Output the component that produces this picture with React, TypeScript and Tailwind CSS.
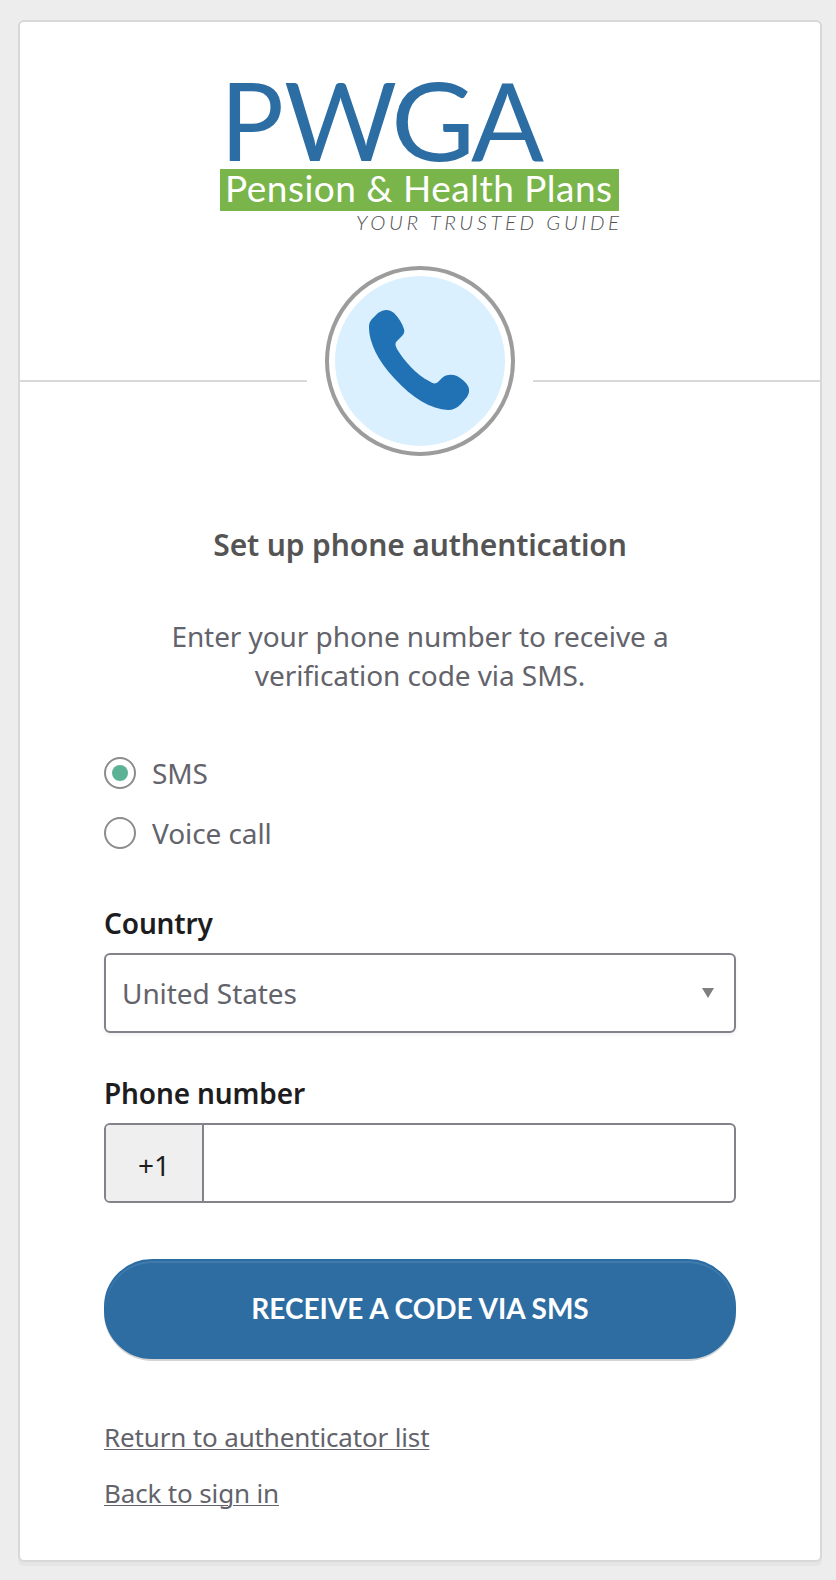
import { useState } from 'react'
import clsx from 'clsx'

const methods = [
  { id: 'sms', label: 'SMS' },
  { id: 'call', label: 'Voice call' },
]

function Logo() {
  return (
    <svg width="404" height="192" viewBox="0 -32 404 192" role="img" aria-label="PWGA Pension & Health Plans">
      <g fill="#2c6da3" fontFamily="Lato, sans-serif" fontSize="109">
        <text x="0" y="81" textLength="64" lengthAdjust="spacingAndGlyphs">P</text>
        <text x="64" y="81" textLength="113" lengthAdjust="spacingAndGlyphs">W</text>
        <text x="171" y="81" textLength="84" lengthAdjust="spacingAndGlyphs">G</text>
        <text x="251" y="81" textLength="73" lengthAdjust="spacingAndGlyphs">A</text>
      </g>
      <rect x="0" y="89" width="399" height="42" fill="#79b54a" />
      <text
        x="5" y="122" fill="#fff" fontFamily="Lato, sans-serif" fontSize="37"
        textLength="387" lengthAdjust="spacing"
      >
        Pension &amp; Health Plans
      </text>
      <text
        x="136" y="150" fill="#4f5052" fontFamily="Lato, sans-serif" fontSize="20.5" fontStyle="italic" fontWeight="300"
        textLength="263" lengthAdjust="spacing"
      >
        YOUR TRUSTED GUIDE
      </text>
    </svg>
  )
}

function PhoneBadge() {
  return (
    <div className="flex h-[190px] w-[190px] items-center justify-center rounded-full border-4 border-[#9c9c9c] bg-white">
      <svg width="170" height="170" viewBox="0 0 170 170" aria-hidden="true">
        <circle cx="85" cy="85" r="85" fill="#daf0fe" />
        <path
          d="M34 52C34 47 35 45 38 42L43 37C49 33 54 33 59 37C64 42 67 47 69 53C70 57 68 59 66 61L62 65C60 67 60 69 62 73C69 85 82 99 94 105C98 108 101 108 103 106L107 102C111 98 117 98 122 100C127 103 131 106 133 110C135 114 134 118 132 121L126 128C122 132 118 134 113 134C96 133 78 123 59 102C43 85 34 66 34 52Z"
          fill="#2172b4"
        />
      </svg>
    </div>
  )
}

export default function App() {
  const [method, setMethod] = useState('sms')
  const [phone, setPhone] = useState('')

  return (
    <div className="h-[1580px] w-[836px] bg-[#ededed] pl-[18px] pt-5 font-['Noto_Sans',sans-serif] text-[28px] tracking-[-0.08px] text-[#63636b]">
      <main className="flex h-[1542px] w-[804px] flex-col rounded-md border-2 border-[#d8d8d8] bg-white shadow-[0_4px_0_rgba(175,175,175,0.12)]">
        <header className="flex h-[244px] shrink-0 justify-center pl-[3px] pt-[26px]">
          <Logo />
        </header>

        <div className="flex h-[190px] shrink-0 justify-between">
          <div className="mt-[114px] h-0.5 w-[287px] bg-[#d8d8d8]" />
          <PhoneBadge />
          <div className="mt-[114px] h-0.5 w-[287px] bg-[#d8d8d8]" />
        </div>

        <form className="flex flex-col px-[84px] pt-[69px]" onSubmit={(e) => e.preventDefault()}>
          <h1 className="text-center text-[30px] font-semibold leading-10 tracking-[-0.13px] text-[#545454]">
            Set up phone authentication
          </h1>
          <p className="mx-auto mt-[52px] w-[520px] text-center leading-[39px]">
            Enter your phone number to receive a verification code via SMS.
          </p>

          <div className="mt-[62px] flex flex-col gap-7" role="radiogroup">
            {methods.map((m) => (
              <label key={m.id} className="flex h-8 items-center gap-4 leading-8">
                <input
                  type="radio"
                  name="method"
                  className="sr-only"
                  checked={method === m.id}
                  onChange={() => setMethod(m.id)}
                />
                <span className="flex h-8 w-8 items-center justify-center rounded-full border-2 border-[#8c8c8c]">
                  <span className={clsx('h-4 w-4 rounded-full', method === m.id && 'bg-[#5cb295]')} />
                </span>
                {m.label}
              </label>
            ))}
          </div>

          <span className="mt-[54px] font-semibold leading-10 tracking-[-0.13px] text-[#1d1d21]">Country</span>
          <button
            type="button"
            className="mt-2.5 flex h-20 items-center justify-between rounded-md border-2 border-[#82828b] pl-4 pr-5 shadow-[0_2px_4px_rgba(0,0,0,0.06)]"
          >
            United States
            <svg width="12" height="10" viewBox="0 0 12 10" aria-hidden="true">
              <path d="M0 0H12L6 10Z" fill="#7f7f7f" />
            </svg>
          </button>

          <label htmlFor="phone" className="mt-10 font-semibold leading-10 tracking-[-0.13px] text-[#1d1d21]">
            Phone number
          </label>
          <div className="mt-2.5 flex h-20 overflow-hidden rounded-md border-2 border-[#82828b]">
            <span className="flex w-[98px] items-center justify-center border-r-2 border-[#82828b] bg-[#efefef] pt-[3px] text-[#1d1d21]">
              +1
            </span>
            <input
              id="phone"
              type="tel"
              value={phone}
              onChange={(e) => setPhone(e.target.value)}
              className="flex-1 px-4 outline-none"
            />
          </div>

          <button
            type="submit"
            className="mt-14 h-[100px] rounded-[48px] border-2 border-[#2c6da3] bg-[#2d6da2] pb-0.5 font-['Lato',sans-serif] text-[28px] font-bold tracking-normal text-white shadow-[0_2px_0_rgba(0,0,0,0.17),inset_0_2px_0_rgba(255,255,255,0.1)]"
          >
            RECEIVE A CODE VIA SMS
          </button>

          <div className="mt-[60px] flex flex-col items-start gap-5 text-[26px] leading-9 tracking-[-0.15px]">
            <a href="#" className="underline decoration-1 underline-offset-2">Return to authenticator list</a>
            <a href="#" className="underline decoration-1 underline-offset-2">Back to sign in</a>
          </div>
        </form>
      </main>
    </div>
  )
}
